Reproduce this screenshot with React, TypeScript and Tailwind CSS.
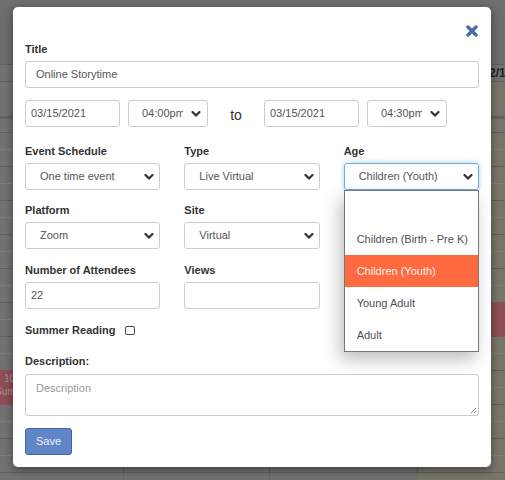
import type { ReactNode } from "react";

const font = "font-['Liberation_Sans',Arial,Helvetica,sans-serif]";

function Chevron() {
  return (
    <svg width="10" height="6" viewBox="0 0 10 6" className="shrink-0">
      <path d="M1.5 1 L5 4.6 L8.5 1" fill="none" stroke="#333" strokeWidth="2.2" strokeLinecap="round" strokeLinejoin="round" />
    </svg>
  );
}

function Label({ children }: { children: ReactNode }) {
  return <div className="h-[17px] text-[11px] leading-[17px] font-bold text-[#333]">{children}</div>;
}

function Select({ value, focused = false }: { value: string; focused?: boolean }) {
  return (
    <div
      className={
        focused
          ? "flex h-[27px] items-center rounded-[3px] border border-[#66afe9] pl-[14px] pr-[5px] shadow-[0_0_5px_rgba(102,175,233,0.6)]"
          : "flex h-[27px] items-center rounded-[3px] border border-[#ccc] pl-[14px] pr-[5px]"
      }
    >
      <span className="flex-1 truncate text-[11px] text-[#555]">{value}</span>
      <Chevron />
    </div>
  );
}

function TimeSelect({ value }: { value: string }) {
  return (
    <div className="flex h-[27px] w-[80px] items-center rounded-[3px] border border-[#ccc] pl-[13px] pr-[6px]">
      <span className="w-[41px] overflow-hidden whitespace-nowrap text-[11px] text-[#555]">{value}</span>
      <span className="ml-auto">
        <Chevron />
      </span>
    </div>
  );
}

function Input({ value, pad = "pl-[5px]", className = "" }: { value?: string; pad?: string; className?: string }) {
  return (
    <div className={`flex h-[27px] items-center rounded-[3px] border border-[#ccc] ${pad} text-[11px] text-[#555] ${className}`}>
      {value}
    </div>
  );
}

function SlotRow({ dotted, h = "h-[17px]" }: { dotted: boolean; h?: string }) {
  const b = dotted ? "border-dotted border-[#8a8a8a]" : "border-solid border-[#5f5f5f]";
  return (
    <div className={`grid ${h} grid-cols-[123px_146px_148px_1fr]`}>
      <div className={`border-b ${b}`} />
      <div className={`border-b border-l border-l-[#5f5f5f] ${b}`} />
      <div className={`border-b border-l border-l-[#5f5f5f] ${b}`} />
      <div className={`border-b border-l border-l-[#5f5f5f] bg-[#77766a] ${b}`} />
    </div>
  );
}

function Calendar() {
  const slots = Array.from({ length: 21 }, (_, i) => i);
  return (
    <div className="flex flex-col">
      <div className="h-[65px] border-b border-[#5f5f5f] bg-[#6e6e6e]" />
      <div className="grid h-[17px] grid-cols-[123px_146px_148px_1fr] border-b border-[#5f5f5f]">
        <div />
        <div />
        <div />
        <div className="overflow-hidden whitespace-nowrap pl-[72px] text-[12px] font-bold leading-[17px] text-[#1e1e1e]">2/15</div>
      </div>
      <SlotRow dotted={false} h="h-[35px]" />
      <div className="h-[2px] bg-[#626262]" />
      <SlotRow dotted={false} h="h-[14px]" />
      {slots.map((i) => (
        <SlotRow key={i} dotted={i % 2 === 0} />
      ))}
    </div>
  );
}

export default function App() {
  return (
    <div className={`relative h-[480px] w-[505px] overflow-hidden bg-[#727272] ${font}`}>
      <Calendar />

      {/* events behind the overlay */}
      <div className="absolute left-0 top-[370px] h-[35px] w-[110px] overflow-hidden bg-[#8b4f54] pl-[4px] pt-[2px] text-[10px] leading-[13px] text-[#b88e90]">
        <div>10:30</div>
        <div className="-ml-[9px]">Summer</div>
      </div>
      <div className="absolute left-[420px] top-[302px] h-[35px] w-[85px] bg-[#8b4f54]" />

      {/* modal */}
      <div className="absolute left-[13px] top-[7px] flex h-[460px] w-[478px] flex-col rounded-[5px] bg-white px-[12px] shadow-[0_3px_10px_rgba(0,0,0,0.45)]">
        <div className="mt-[18px] flex h-[12px] justify-end pr-[1px]">
          <svg width="12" height="12" viewBox="0 0 12 12">
            <path d="M2 2 L10 10 M10 2 L2 10" stroke="#4a6ba6" strokeWidth="3.4" strokeLinecap="round" />
          </svg>
        </div>

        <div className="mt-[4px]">
          <Label>Title</Label>
        </div>
        <Input value="Online Storytime" pad="pl-[10px]" className="mt-[3px]" />

        <div className="mt-[12px] flex items-center">
          <Input value="03/15/2021" pad="pl-[5px]" className="w-[95px]" />
          <div className="ml-[8px]">
            <TimeSelect value="04:00pm" />
          </div>
          <div className="flex w-[56px] justify-center pt-[3px] text-[14px] text-[#333]">to</div>
          <Input value="03/15/2021" pad="pl-[5px]" className="w-[95px]" />
          <div className="ml-[8px]">
            <TimeSelect value="04:30pm" />
          </div>
        </div>

        <div className="mt-[16px] grid grid-cols-3 gap-x-[24px]">
          <div className="flex flex-col gap-[3px]">
            <Label>Event Schedule</Label>
            <Select value="One time event" />
          </div>
          <div className="flex flex-col gap-[3px]">
            <Label>Type</Label>
            <Select value="Live Virtual" />
          </div>
          <div className="relative flex flex-col gap-[3px]">
            <Label>Age</Label>
            <Select value="Children (Youth)" focused />
            {/* open option list */}
            <div className="absolute left-0 top-[47px] z-10 flex w-[135px] flex-col border border-[#777] bg-white text-[11px] text-[#4a505c] shadow-[-4px_8px_16px_rgba(0,0,0,0.25)]">
              <div className="h-[32px]" />
              <div className="flex h-[32px] items-center pl-[12px]">Children (Birth - Pre K)</div>
              <div className="flex h-[32px] items-center bg-[#ff6a40] pl-[12px] text-[#fff1ec]">Children (Youth)</div>
              <div className="flex h-[32px] items-center pl-[12px]">Young Adult</div>
              <div className="flex h-[32px] items-center pl-[12px]">Adult</div>
            </div>
          </div>
        </div>

        <div className="mt-[12px] grid grid-cols-3 gap-x-[24px]">
          <div className="flex flex-col gap-[3px]">
            <Label>Platform</Label>
            <Select value="Zoom" />
          </div>
          <div className="flex flex-col gap-[3px]">
            <Label>Site</Label>
            <Select value="Virtual" />
          </div>
        </div>

        <div className="mt-[13px] grid grid-cols-3 gap-x-[24px]">
          <div className="flex flex-col gap-[3px]">
            <Label>Number of Attendees</Label>
            <Input value="22" pad="pl-[5px]" />
          </div>
          <div className="flex flex-col gap-[3px]">
            <Label>Views</Label>
            <Input />
          </div>
        </div>

        <div className="mt-[13px] flex items-center">
          <Label>Summer Reading</Label>
          <div className="ml-[10px] h-[9px] w-[10px] rounded-[2px] border border-[#444]" />
        </div>

        <div className="mt-[14px]">
          <Label>Description:</Label>
        </div>
        <div className="relative mt-[4px] h-[42px] rounded-[3px] border border-[#ccc] pl-[10px] pt-[5px] text-[11px] text-[#999]">
          Description
          <svg width="7" height="7" viewBox="0 0 7 7" className="absolute bottom-[1px] right-[1px]">
            <path d="M6 1 L1 6 M6 4 L4 6" stroke="#666" strokeWidth="0.8" />
          </svg>
        </div>

        <div className="mt-[12px]">
          <div className="flex h-[27px] w-[47px] items-center justify-center rounded-[3px] border border-[#3b66ad] bg-[#6186c8] text-[11px] text-[#eef2fa]">
            Save
          </div>
        </div>
      </div>
    </div>
  );
}
